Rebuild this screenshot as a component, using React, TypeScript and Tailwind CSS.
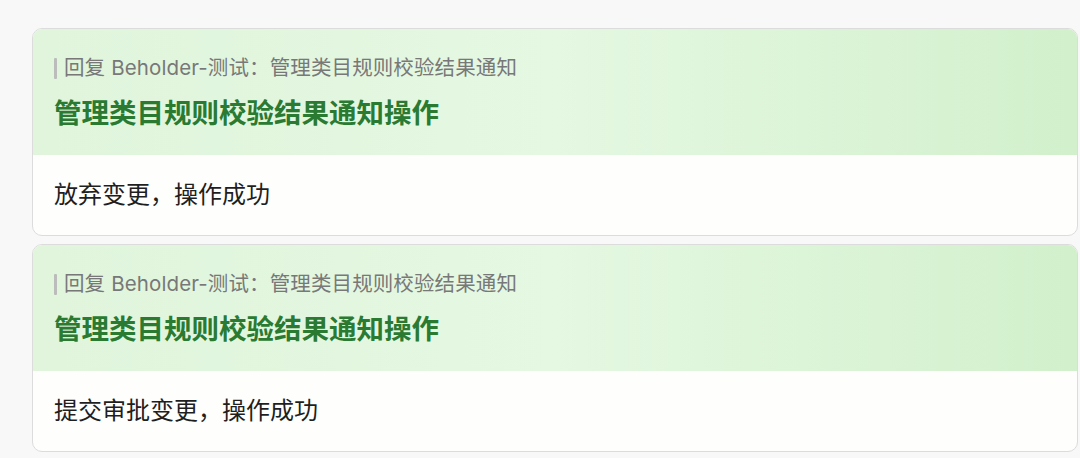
import React from "react";

const font = { fontFamily: '"Inter", "Noto Sans CJK SC", sans-serif' };

function Card({ body }: { body: string }) {
  return (
    <div className="overflow-hidden rounded-[10px] border border-[#dcdcdc] bg-[#fefefd]">
      <div className="bg-gradient-to-r from-[#e0f5dc] via-[#e5f8e2] to-[#d2f0cc] px-[21px] pt-[27px] pb-[24px]">
        <div className="flex items-center h-[24px]">
          <div className="w-[3px] h-[21px] bg-[#bcbcbc] rounded-[1px] mr-[7px]" />
          <span className="text-[20.5px] leading-[24px] tracking-[0.12px] text-[#787878]">
            回复 Beholder-测试：管理类目规则校验结果通知
          </span>
        </div>
        <div className="mt-[15px] text-[27.5px] leading-[36px] font-bold text-[#2a7a32]">
          管理类目规则校验结果通知操作
        </div>
      </div>
      <div className="px-[21px] pt-[24px] pb-[24px] text-[24px] leading-[32px] text-[#1f1f1f]">
        {body}
      </div>
    </div>
  );
}

export default function App() {
  return (
    <div className="w-[1080px] h-[458px] bg-[#f8f8f8] overflow-hidden" style={font}>
      <div className="flex flex-col gap-[8px] pl-[32px] pr-[2px] pt-[28px]">
        <Card body="放弃变更，操作成功" />
        <Card body="提交审批变更，操作成功" />
      </div>
    </div>
  );
}
